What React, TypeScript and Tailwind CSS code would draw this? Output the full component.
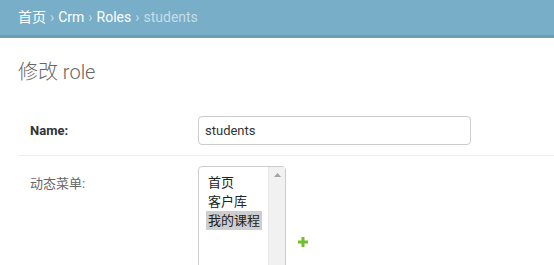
export default function App() {
  const font = { fontFamily: 'Roboto, "Noto Sans CJK SC", sans-serif' };
  return (
    <div className="w-[554px] h-[265px] overflow-hidden bg-white" style={font}>
      <div className="h-[38px] bg-[#79aec8] border-b-[3px] border-[#6d9db3] px-[18px] flex items-center text-[14px] text-white">
        <span>首页</span>
        <span className="mx-1 text-[#c4dce8]">›</span>
        <span>Crm</span>
        <span className="mx-1 text-[#c4dce8]">›</span>
        <span>Roles</span>
        <span className="mx-1 text-[#c4dce8]">›</span>
        <span className="text-[#c4dce8]">students</span>
      </div>
      <div className="pl-[18px] pt-[22px]">
        <h1 className="text-[20px] font-light text-[#666] leading-6">修改 role</h1>
        <div className="mt-[22px]">
          <div className="flex items-center px-3 py-[10px] border-b border-[#eee]">
            <label className="w-[168px] text-[13px] font-bold text-[#333]">Name:</label>
            <input
              className="w-[273px] h-[29px] border border-[#ccc] rounded px-[6px] text-[13px] text-[#333] outline-none"
              defaultValue="students"
            />
          </div>
          <div className="flex items-start px-3 pt-[10px]">
            <label className="w-[168px] text-[13px] text-[#666] mt-[8px]">动态菜单:</label>
            <div className="w-[88px] h-[120px] border border-[#ccc] rounded flex">
              <div className="flex-1 pt-[6px] pl-[7px] text-[13px] text-[#222] leading-[19px] flex flex-col items-start">
                <span className="px-[2px]">首页</span>
                <span className="px-[2px]">客户库</span>
                <span className="px-[2px] bg-[#cecece]">我的课程</span>
              </div>
              <div className="w-[17px] bg-[#f1f1f1] border-l border-[#e6e6e6] flex justify-center pt-[6px]">
                <svg width="7" height="4" viewBox="0 0 7 4">
                  <path d="M0 4 L3.5 0 L7 4 Z" fill="#a3a3a3" />
                </svg>
              </div>
            </div>
            <svg className="ml-[12px] mt-[71px]" width="10" height="10" viewBox="0 0 10 10">
              <path d="M3.5 0 H6.5 V3.5 H10 V6.5 H6.5 V10 H3.5 V6.5 H0 V3.5 H3.5 Z" fill="#70bf2b" />
            </svg>
          </div>
        </div>
      </div>
    </div>
  );
}
